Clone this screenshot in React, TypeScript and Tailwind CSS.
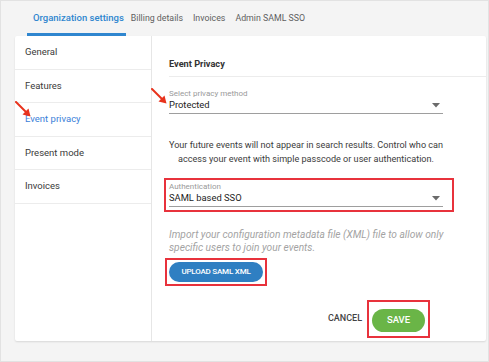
import React from 'react'

const tabs = ['Organization settings', 'Billing details', 'Invoices', 'Admin SAML SSO']
const menu = ['General', 'Features', 'Event privacy', 'Present mode', 'Invoices']

function Caret() {
  return (
    <svg width="8" height="5" viewBox="0 0 8 5" className="mr-[3px]">
      <path d="M0 0 L8 0 L4 4.5 Z" fill="#6b6b6b" />
    </svg>
  )
}

function SelectField({ label, value }: { label: string; value: string }) {
  return (
    <div className="w-[274px]">
      <div className="text-[8px] leading-[9px] text-[#9a9a9a]">{label}</div>
      <div className="flex items-center justify-between h-[16px] border-b border-[#9e9e9e] pb-[1px]">
        <span className="text-[9.4px] leading-[14px] text-[#222]">{value}</span>
        <Caret />
      </div>
    </div>
  )
}

function RedArrow({ className }: { className: string }) {
  return (
    <svg width="18" height="18" viewBox="0 0 18 18" className={`absolute ${className}`}>
      <path d="M1 1 L11.5 11.5" stroke="#e8321c" strokeWidth="2" strokeLinecap="round" />
      <path d="M15.5 15.5 L7.5 13.5 L13.5 7.5 Z" fill="#e8321c" />
    </svg>
  )
}

export default function App() {
  return (
    <div
      className="relative w-[489px] h-[362px] bg-[#f4f4f4] border border-[#e2e2e2] overflow-hidden"
      style={{ fontFamily: 'Roboto, "Liberation Sans", sans-serif' }}
    >
      <div className="flex h-[35px] pl-[26px]">
        {tabs.map((t, i) => (
          <div
            key={t}
            className={
              i === 0
                ? 'flex items-center h-full pl-[6px] pr-[2px] text-[9.5px] font-medium text-[#2f86cf] border-b-[3px] border-[#2f86cf] pt-[3px]'
                : 'flex items-center h-full px-[5px] text-[8.8px] text-[#5f5f5f] pt-[3px] border-b-[3px] border-transparent'
            }
          >
            {t}
          </div>
        ))}
      </div>

      <div className="flex ml-[14px] mr-[2px] h-[305px] bg-white rounded-[2px] shadow-[0_1px_2px_rgba(0,0,0,0.12)]">
        <div className="w-[137px] border-r border-[#e6e6e6]">
          {menu.map((m, i) => (
            <div
              key={m}
              className={`flex items-center h-[33.5px] pl-[10px] border-b border-[#ececec] text-[9.5px] ${
                i === 2 ? 'text-[#3b7fd9]' : 'text-[#3a3a3a]'
              }`}
            >
              {m}
            </div>
          ))}
        </div>

        <div className="flex-1 pl-[17px]">
          <div className="pt-[21px] pb-[5px] border-b border-[#ececec]">
            <div className="text-[9.2px] leading-[14px] font-bold text-[#333]">Event Privacy</div>
          </div>

          <div className="mt-[12px]">
            <SelectField label="Select privacy method" value="Protected" />
          </div>

          <p className="w-[274px] mt-[24px] text-center text-[9.1px] leading-[14px] text-[#3c3c3c] whitespace-nowrap">
            Your future events will not appear in search results. Control who can
            <br />
            access your event with simple passcode or user authentication.
          </p>

          <div className="mt-[12px] -ml-[5px] w-[290px] border-2 border-[#e8323c] pl-[3px] pt-[2px] pb-[3px]">
            <SelectField label="Authentication" value="SAML based SSO" />
          </div>

          <p className="mt-[16px] text-[10.2px] leading-[13px] italic text-[#a3a3a3] whitespace-nowrap">
            Import your configuration metadata file (XML) file to allow only
            <br />
            specific users to join your events.
          </p>

          <div className="mt-[4px] -ml-[4px] inline-flex border-2 border-[#e8323c] p-[2px]">
            <button className="w-[94px] h-[20px] rounded-full bg-[#2f7fc2] text-white text-[8px] font-medium tracking-tight">
              UPLOAD SAML XML
            </button>
          </div>

          <div className="w-[274px] mt-[14px] flex items-center justify-end pr-[13px]">
            <span className="text-[9px] font-medium text-[#444] mr-[5px]">CANCEL</span>
            <div className="border-2 border-[#e8323c] px-[3px] py-[4px]">
              <button className="w-[53px] h-[23px] rounded-full bg-[#6ab547] text-white text-[9.5px] font-medium">
                SAVE
              </button>
            </div>
          </div>
        </div>
      </div>

      <RedArrow className="left-[14px] top-[100px]" />
      <RedArrow className="left-[150px] top-[87px]" />
    </div>
  )
}
